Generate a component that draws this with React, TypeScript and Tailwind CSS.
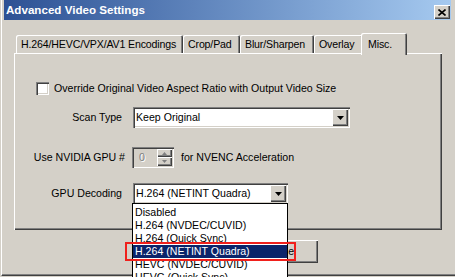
import React from "react";

const raised =
  "shadow-[inset_1px_1px_0_#fff,inset_-1px_-1px_0_#404040,inset_-2px_-2px_0_#808080]";
const sunken =
  "shadow-[inset_1px_1px_0_#808080,inset_2px_2px_0_#404040,inset_-1px_-1px_0_#fff,inset_-2px_-2px_0_#d4d0c8]";

function DropArrow() {
  return (
    <span className={`flex h-[17px] w-[16px] shrink-0 items-center justify-center bg-[#d4d0c8] ${raised}`}>
      <svg width="7" height="4" viewBox="0 0 7 4">
        <path d="M0 0h7L3.5 4z" fill="#000" />
      </svg>
    </span>
  );
}

function Select({ value, width }: { value: string; width: string }) {
  return (
    <div className={`flex h-[21px] ${width} items-center justify-between bg-white pl-[2px] pr-[2px] ${sunken}`}>
      <span className="pl-[1px] leading-none">{value}</span>
      <DropArrow />
    </div>
  );
}

function Tab({ label, w, selected }: { label: string; w: string; selected?: boolean }) {
  if (selected) {
    return (
      <div
        className={`relative z-10 -mb-[2px] -ml-[2px] flex h-[22px] ${w} items-start whitespace-nowrap rounded-t-[2px] bg-[#d4d0c8] pl-[7px] pt-[4px] shadow-[inset_1px_1px_0_#fff,inset_-1px_0_0_#404040,inset_-2px_0_0_#808080]`}
      >
        {label}
      </div>
    );
  }
  return (
    <div
      className={`flex h-[18px] ${w} items-center whitespace-nowrap rounded-t-[2px] bg-[#d4d0c8] pl-[5px] pt-[1px] shadow-[inset_1px_1px_0_#fff,inset_-1px_0_0_#404040,inset_-2px_0_0_#808080]`}
    >
      {label}
    </div>
  );
}

const options = [
  "Disabled",
  "H.264 (NVDEC/CUVID)",
  "H.264 (Quick Sync)",
  "H.264 (NETINT Quadra)",
  "HEVC (NVDEC/CUVID)",
  "HEVC (Quick Sync)",
];

export default function App() {
  return (
    <div className="relative h-[277px] w-[455px] overflow-hidden bg-[#d4d0c8] font-['Liberation_Sans',Arial,sans-serif] text-[10.6px] text-black">
      <div className="ml-[1px] h-[276px] border-b border-l border-b-[#404040] border-l-white shadow-[inset_0_-1px_0_#808080]">
        {/* title bar */}
        <div className="ml-[2px] flex h-[20px] w-[447px] justify-between bg-gradient-to-r from-[#2d5194] to-[#a6caf0]">
          <span className="pl-[2px] pt-[4px] text-[11.6px] font-bold leading-none text-white">
            Advanced Video Settings
          </span>
          <span className={`mr-[1px] mt-[5px] flex h-[14px] w-[16px] items-center justify-center bg-[#d4d0c8] ${raised}`}>
            <svg width="8" height="7" viewBox="0 0 8 7">
              <path d="M0.5 0.5l7 6M7.5 0.5l-7 6" stroke="#000" strokeWidth="1.6" />
            </svg>
          </span>
        </div>

        {/* tabs */}
        <div className="ml-[14px] mt-[13px] flex h-[20px] items-end tracking-[-0.15px]">
          <Tab label="H.264/HEVC/VPX/AV1 Encodings" w="w-[167px]" />
          <Tab label="Crop/Pad" w="w-[57px]" />
          <Tab label="Blur/Sharpen" w="w-[74px]" />
          <Tab label="Overlay" w="w-[49px]" />
          <Tab label="Misc." w="w-[46px]" selected />
        </div>

        {/* panel */}
        <div className="ml-[12px] h-[177px] w-[428px] pt-[29px] shadow-[inset_1px_1px_0_#fff,inset_-1px_-1px_0_#404040,inset_-2px_-2px_0_#808080]">
          <div className="flex h-[13px] items-center pl-[22px]">
            <span className={`h-[13px] w-[13px] bg-white ${sunken}`} />
            <span className="ml-[5px] whitespace-nowrap leading-none">
              Override Original Video Aspect Ratio with Output Video Size
            </span>
          </div>

          <div className="mt-[12px] flex items-center">
            <span className="w-[108px] text-right">Scan Type</span>
            <span className="ml-[11px]">
              <Select value="Keep Original" width="w-[217px]" />
            </span>
          </div>

          <div className="mt-[19px] flex items-center">
            <span className="w-[111px] text-right">Use NVIDIA GPU #</span>
            <div className={`ml-[7px] flex h-[21px] w-[42px] items-center justify-between bg-[#d4d0c8] pl-[7px] pr-[2px] ${sunken}`}>
              <span className="text-[#808080] [text-shadow:1px_1px_0_#fff]">0</span>
              <div className="flex flex-col">
                <span className={`flex h-[8px] w-[15px] items-center justify-center ${raised}`}>
                  <svg width="5" height="3" viewBox="0 0 5 3">
                    <path d="M2.5 0L5 3H0z" fill="#808080" />
                  </svg>
                </span>
                <span className={`flex h-[9px] w-[15px] items-center justify-center ${raised}`}>
                  <svg width="5" height="3" viewBox="0 0 5 3">
                    <path d="M0 0h5L2.5 3z" fill="#808080" />
                  </svg>
                </span>
              </div>
            </div>
            <span className="ml-[7px]">for NVENC Acceleration</span>
          </div>

          <div className="mt-[15px] flex items-center">
            <span className="w-[108px] text-right">GPU Decoding</span>
            <span className="ml-[11px]">
              <Select value="H.264 (NETINT Quadra)" width="w-[155px]" />
            </span>
          </div>
        </div>

        {/* buttons */}
        <div className="ml-[241px] mt-[10px] flex">
          <span className={`flex h-[23px] w-[75px] items-center justify-center ${raised}`}>Close</span>
        </div>
      </div>

      {/* open dropdown list */}
      <div className="absolute left-[132px] top-[203px] h-[90px] w-[156px] border border-black bg-white pt-[2px]">
        {options.map((o, i) => (
          <div
            key={o}
            className={`flex h-[13px] items-center pl-[2px] leading-none ${
              i === 3 ? "bg-[#0a246a] text-white" : "text-black"
            }`}
          >
            {o}
          </div>
        ))}
      </div>

      {/* annotation */}
      <div className="absolute left-[125px] top-[242px] h-[19px] w-[171px] border-2 border-[#f0201c]" />
    </div>
  );
}
